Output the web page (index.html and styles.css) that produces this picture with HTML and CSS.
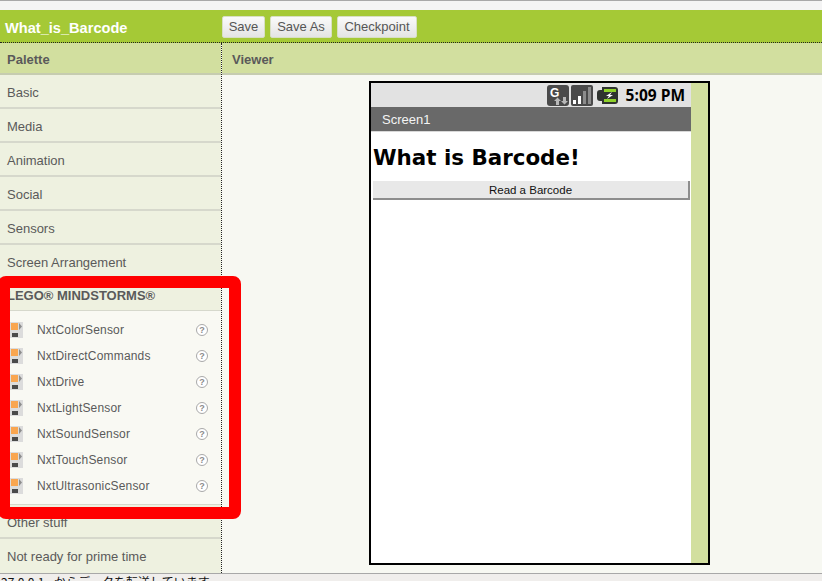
FILE: index.html
```html
<!DOCTYPE html>
<html lang="en">
<head>
<meta charset="utf-8">
<title>What_is_Barcode</title>
<link rel="stylesheet" href="styles.css">
</head>
<body>
<div class="page">
  <div class="topstrip"></div>
  <header class="titlebar">
    <div class="project">What_is_Barcode</div>
    <div class="actions">
      <button class="btn btn-save">Save</button>
      <button class="btn btn-saveas">Save As</button>
      <button class="btn btn-check">Checkpoint</button>
    </div>
  </header>
  <main class="workspace">
    <aside class="palette">
      <div class="panelhead">Palette</div>
      <div class="cat">Basic</div>
      <div class="cat">Media</div>
      <div class="cat">Animation</div>
      <div class="cat">Social</div>
      <div class="cat">Sensors</div>
      <div class="cat">Screen Arrangement</div>
      <div class="cat cat-open">LEGO® MINDSTORMS®</div>
      <div class="items">
        <div class="item"><svg class="ico" viewBox="0 0 14 16"><use href="#nxt"/></svg><span class="name">NxtColorSensor</span><span class="help">?</span></div>
        <div class="item"><svg class="ico" viewBox="0 0 14 16"><use href="#nxt"/></svg><span class="name">NxtDirectCommands</span><span class="help">?</span></div>
        <div class="item"><svg class="ico" viewBox="0 0 14 16"><use href="#nxt"/></svg><span class="name">NxtDrive</span><span class="help">?</span></div>
        <div class="item"><svg class="ico" viewBox="0 0 14 16"><use href="#nxt"/></svg><span class="name">NxtLightSensor</span><span class="help">?</span></div>
        <div class="item"><svg class="ico" viewBox="0 0 14 16"><use href="#nxt"/></svg><span class="name">NxtSoundSensor</span><span class="help">?</span></div>
        <div class="item"><svg class="ico" viewBox="0 0 14 16"><use href="#nxt"/></svg><span class="name">NxtTouchSensor</span><span class="help">?</span></div>
        <div class="item"><svg class="ico" viewBox="0 0 14 16"><use href="#nxt"/></svg><span class="name">NxtUltrasonicSensor</span><span class="help">?</span></div>
      </div>
      <div class="cat cat-other">Other stuff</div>
      <div class="cat cat-last">Not ready for prime time</div>
    </aside>
    <section class="viewer">
      <div class="panelhead viewerhead">Viewer</div>
      <div class="stage">
        <div class="phone">
          <div class="screen">
            <div class="status">
              <svg class="st st-g" viewBox="0 0 22 21">
                <rect x="0" y="0" width="22" height="21" rx="3" fill="#4a4a4a"/>
                <text x="3" y="12" class="g-letter">G</text>
                <path d="M9 20v-4H7l3.500-3.500L14 16h-2v4zM16 12v4h-2l3.500 3.500L21 16h-2v-4z" fill="#b8b8b8"/>
              </svg>
              <svg class="st st-s" viewBox="0 0 22 21">
                <rect x="0" y="0" width="22" height="21" rx="2" fill="#4a4a4a"/>
                <rect x="2" y="15" width="3" height="4" fill="#fff"/>
                <rect x="7" y="11" width="3" height="8" fill="#fff"/>
                <rect x="12" y="6" width="3" height="13" fill="#8c8c8c"/>
                <rect x="17" y="2" width="3" height="17" fill="#8c8c8c"/>
              </svg>
              <svg class="st st-b" viewBox="0 0 21 17">
                <path d="M3 3h2V0h13a3 3 0 0 1 3 3v11a3 3 0 0 1-3 3H5v-3H3a3 3 0 0 1-3-3V6a3 3 0 0 1 3-3z" fill="#2f332f"/>
                <rect x="7" y="2" width="12" height="3" fill="#8fd12a"/>
                <rect x="7" y="12" width="12" height="3" fill="#8fd12a"/>
                <path d="M15 5l-6 4h3l-2 3 6-4h-3z" fill="#fff"/>
              </svg>
              <span class="clock">5:09 PM</span>
            </div>
            <div class="appbar">Screen1</div>
            <div class="content">
              <div class="apptitle">What is Barcode!</div>
              <button class="readbtn">Read a Barcode</button>
            </div>
          </div>
          <div class="scroll"></div>
        </div>
      </div>
    </section>
  </main>
  <footer class="statusbar">27.0.0.1 からデータを転送しています</footer>
  <div class="redbox"></div>
</div>
<svg class="defs" width="0" height="0">
  <symbol id="nxt" viewBox="0 0 14 16">
    <rect x="0" y="0" width="14" height="16" fill="#dcdcdc"/>
    <rect x="2" y="1" width="7" height="7" fill="#f9a650"/>
    <path d="M10 1l3 3.500-3 3.500z" fill="#8e8e8e"/>
    <rect x="3" y="11" width="6" height="4" fill="#4a4a4a"/>
  </symbol>
</svg>
</body>
</html>
```

FILE: styles.css
```css
html, body {
  margin: 0;
  padding: 0;
  background: #f7f8f2;
}
.page {
  position: relative;
  width: 822px;
  height: 581px;
  overflow: hidden;
  display: flex;
  flex-direction: column;
  font-family: "Liberation Sans", Arial, sans-serif;
  color: #5a5a5a;
}
.defs { position: absolute; }
.topstrip {
  height: 9px;
  flex: none;
  background: #f4f4f4;
  border-top: 1px solid #a8a8a8;
}
.titlebar {
  height: 32px;
  flex: none;
  display: flex;
  align-items: center;
  background: #a5c936;
  border-bottom: 1px dotted #222;
}
.project {
  width: 222px;
  padding: 4px 0 0 5px;
  box-sizing: border-box;
  font-size: 14.6px;
  font-weight: bold;
  color: #fff;
}
.actions { display: flex; gap: 5px; margin-top: 2px; }
.btn {
  height: 22px;
  padding: 0;
  margin: 0;
  border: 1px solid #d8dfc4;
  border-radius: 2px;
  background: linear-gradient(#fafafa, #e4e4e4);
  font: 13px/20px "Liberation Sans", Arial, sans-serif;
  color: #555;
}
.btn-save { width: 43px; }
.btn-saveas { width: 62px; }
.btn-check { width: 80px; }
.workspace {
  flex: 1;
  display: flex;
  min-height: 0;
}
.palette {
  width: 221px;
  flex: none;
  display: flex;
  flex-direction: column;
  border-right: 1px dotted #222;
}
.panelhead {
  height: 30px;
  line-height: 33px;
  padding-left: 7px;
  background: #d2df9f;
  border-bottom: 2px solid #c6ccb0;
  font-size: 13px;
  font-weight: bold;
  flex: none;
}
.cat {
  height: 32px;
  line-height: 35px;
  padding-left: 7px;
  background: #eef1e0;
  border-bottom: 2px solid #d6d8cc;
  font-size: 13px;
  flex: none;
}
.cat-open {
  height: 31px;
  line-height: 34px;
  border-bottom-width: 1px;
  font-weight: bold;
}
.items {
  background: #f9f9f3;
  padding-top: 6px;
  height: 187px;
  border-bottom: 1px solid #d6d8cc;
  flex: none;
}
.item {
  height: 26px;
  display: flex;
  align-items: center;
  font-size: 12px;
}
.ico {
  width: 14px;
  height: 16px;
  margin-left: 9px;
  flex: none;
}
.name {
  margin-left: 14px;
  flex: 1;
  letter-spacing: 0.17px;
}
.help {
  width: 10px;
  height: 10px;
  margin-right: 13px;
  border: 1px solid #a9a9a9;
  border-radius: 50%;
  background: #fff;
  font-size: 9px;
  font-weight: bold;
  line-height: 10px;
  text-align: center;
  color: #8a8a8a;
}
.cat-last { height: 34px; line-height: 36px; border-bottom: 0; }
.viewer {
  flex: 1;
  display: flex;
  flex-direction: column;
  min-width: 0;
}
.viewerhead { padding-left: 10px; }
.stage {
  flex: 1;
  padding-top: 6px;
  padding-left: 147px;
  background: #f7f8f2;
}
.phone {
  width: 337px;
  height: 480px;
  border: 2px solid #000;
  display: flex;
  background: #fff;
}
.screen { width: 320px; display: flex; flex-direction: column; }
.scroll { flex: 1; background: #d2df9f; }
.status {
  height: 24px;
  flex: none;
  display: flex;
  align-items: center;
  justify-content: flex-end;
  background: #e2e2e2;
  padding-right: 6px;
}
.st { display: block; flex: none; }
.st-g { width: 22px; height: 21px; margin-right: 2px; }
.st-s { width: 22px; height: 21px; margin-right: 4px; }
.st-b { width: 21px; height: 17px; margin-right: 8px; }
.g-letter {
  font: bold 12px "Liberation Sans", Arial, sans-serif;
  fill: #fff;
}
.clock {
  font-size: 15.5px;
  font-weight: bold;
  color: #000;
  font-family: "Open Sans", "Liberation Sans", sans-serif;
}
.appbar {
  height: 24px;
  line-height: 26px;
  flex: none;
  background: #696969;
  border-bottom: 1px solid #d8d8d8;
  padding-left: 11px;
  font-size: 13px;
  color: #f4f4f4;
}
.content {
  flex: 1;
  background: #fff;
  padding: 0 2px;
}
.apptitle {
  font-family: "DejaVu Sans", sans-serif;
  font-size: 21.4px;
  font-weight: bold;
  line-height: 26px;
  padding-top: 13px;
  color: #000;
}
.readbtn {
  display: block;
  width: 317px;
  height: 19px;
  margin: 10px 0 0;
  padding: 0;
  border: 0;
  border-right: 2px solid #8d8d8d;
  border-bottom: 2px solid #8d8d8d;
  background: #e8e8e8;
  font: 11.5px "Liberation Sans", Arial, sans-serif;
  color: #111;
}
.statusbar {
  height: 7px;
  flex: none;
  border-top: 1px solid #a8a8a8;
  background: #f0eeec;
  font: 12px/15px "Noto Sans CJK JP", "Liberation Sans", sans-serif;
  word-spacing: 7px;
  color: #111;
  overflow: hidden;
  padding-left: 1px;
}
.redbox {
  position: absolute;
  left: -2px;
  top: 276px;
  width: 219px;
  height: 219px;
  border: 12px solid #ff0000;
  border-radius: 8px;
}
```
